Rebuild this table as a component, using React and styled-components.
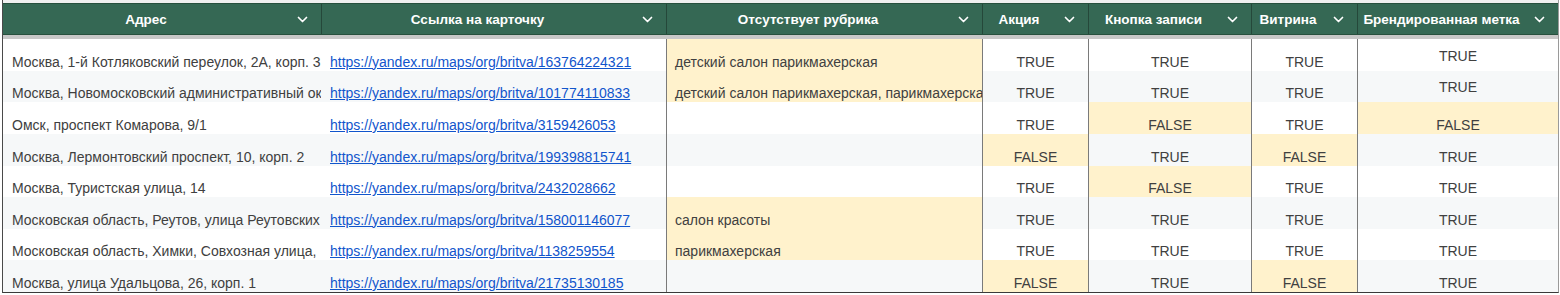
import React from "react";
import styled, { createGlobalStyle } from "styled-components";

const GlobalStyle = createGlobalStyle`
  body {
    margin: 0;
    background: #ffffff;
    font-family: "Liberation Sans", Arial, sans-serif;
  }
`;

const COLUMNS = "318px 345px 316px 106px 163px 106px 201px";

const Sheet = styled.div`
  width: 1555px;
  margin-left: 2px;
  border-left: 1px solid #4a4a4a;
  border-right: 1px solid #9a9a9a;
  border-bottom: 1px solid #3a3a3a;
`;

const TopStrip = styled.div`
  height: 3px;
  background: #f0f0f0;
`;

const Header = styled.div`
  display: grid;
  grid-template-columns: ${COLUMNS};
  height: 30px;
  background: #356854;
  border-top: 1px solid #27503d;
  border-bottom: 1px solid #27503d;
`;

const HeaderCell = styled.div`
  display: flex;
  align-items: center;
  padding: 0 13px 0 0;
  color: #ffffff;
  font-size: 13.5px;
  font-weight: bold;
  box-shadow: ${(p) => (p.$first ? "none" : "inset 1px 0 0 rgba(0, 0, 0, 0.3)")};
`;

const HeaderLabel = styled.span`
  flex: 1;
  text-align: center;
  white-space: nowrap;
  overflow: hidden;
`;

const Chevron = styled.svg`
  flex: none;
  width: 11px;
  height: 7px;
  margin-left: 8px;
`;

const FrozenLine = styled.div`
  height: 4px;
  background: #c7c7c7;
`;

const Row = styled.div`
  display: grid;
  grid-template-columns: ${COLUMNS};
  height: 31.625px;
  background: ${(p) => (p.$odd ? "#f6f8f9" : "#ffffff")};
`;

const Cell = styled.div`
  display: flex;
  align-items: ${(p) => (p.$middle ? "center" : "flex-end")};
  justify-content: ${(p) => (p.$center ? "center" : "flex-start")};
  padding: ${(p) => (p.$middle ? "2px 8px 0 9px" : "0 8px 1px 9px")};
  font-size: 14px;
  line-height: 16px;
  color: #404040;
  white-space: nowrap;
  overflow: hidden;
  background: ${(p) => (p.$hl ? "#fff2cc" : "transparent")};
  box-shadow: ${(p) => (p.$line ? "inset 1px 0 0 #7a7a7a" : "none")};
`;

const Link = styled.a`
  color: #1155cc;
  text-decoration: underline;
`;

const headers = [
  "Адрес",
  "Ссылка на карточку",
  "Отсутствует рубрика",
  "Акция",
  "Кнопка записи",
  "Витрина",
  "Брендированная метка",
];

const rows = [
  ["Москва, 1-й Котляковский переулок, 2А, корп. 3", "163764224321", "детский салон парикмахерская", true, true, true, true],
  ["Москва, Новомосковский административный округ", "101774110833", "детский салон парикмахерская, парикмахерская", true, true, true, true],
  ["Омск, проспект Комарова, 9/1", "3159426053", "", true, false, true, false],
  ["Москва, Лермонтовский проспект, 10, корп. 2", "199398815741", "", false, true, false, true],
  ["Москва, Туристская улица, 14", "2432028662", "", true, false, true, true],
  ["Московская область, Реутов, улица Реутовских", "158001146077", "салон красоты", true, true, true, true],
  ["Московская область, Химки, Совхозная улица,", "1138259554", "парикмахерская", true, true, true, true],
  ["Москва, улица Удальцова, 26, корп. 1", "21735130185", "", false, true, false, true],
];

function ChevronIcon() {
  return (
    <Chevron viewBox="0 0 11 7">
      <polyline points="1.5,1.5 5.5,5.5 9.5,1.5" fill="none" stroke="#ffffff" strokeWidth="1.7" strokeLinecap="round" strokeLinejoin="round" />
    </Chevron>
  );
}

function App() {
  return (
    <>
      <GlobalStyle />
      <Sheet>
        <TopStrip />
        <Header>
          {headers.map((h, i) => (
            <HeaderCell key={h} $first={i === 0}>
              <HeaderLabel>{h}</HeaderLabel>
              <ChevronIcon />
            </HeaderCell>
          ))}
        </Header>
        <FrozenLine />
        {rows.map(([addr, id, rubric, ...flags], r) => {
          const url = `https://yandex.ru/maps/org/britva/${id}`;
          return (
            <Row key={id} $odd={r % 2 === 1}>
              <Cell>{addr}</Cell>
              <Cell>
                <Link href={url}>{url}</Link>
              </Cell>
              <Cell $line $hl={rubric !== ""}>{rubric}</Cell>
              {flags.map((f, c) => (
                <Cell key={c} $line $center $hl={!f} $middle={c === 3 && r < 2}>
                  {f ? "TRUE" : "FALSE"}
                </Cell>
              ))}
            </Row>
          );
        })}
      </Sheet>
    </>
  );
}

export default App;
